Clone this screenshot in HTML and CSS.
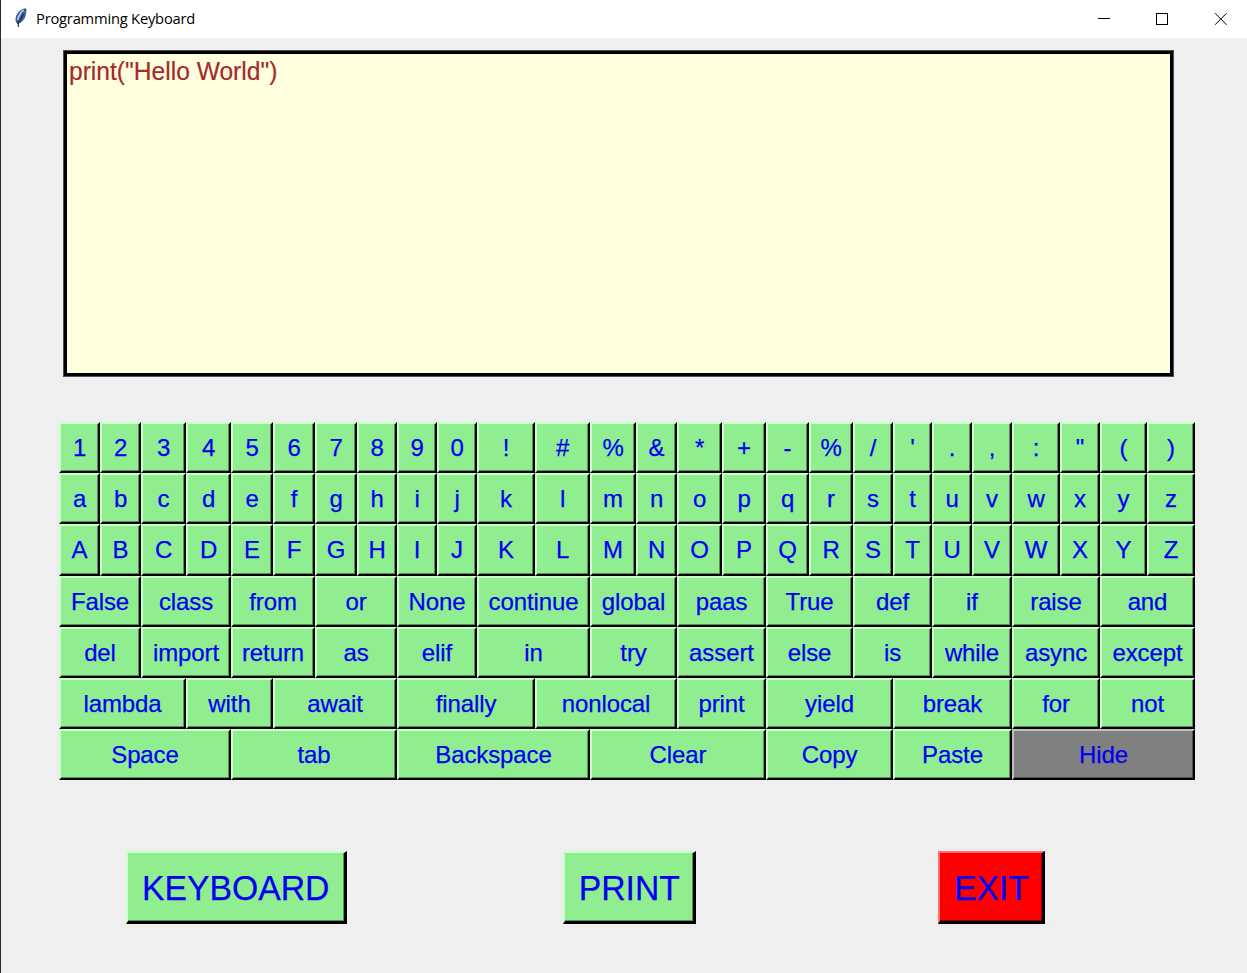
FILE: index.html
```html
<!DOCTYPE html>
<html lang="en">
<head>
<meta charset="utf-8">
<title>Programming Keyboard</title>
<link rel="stylesheet" href="styles.css">
</head>
<body>
<div class="window">
  <header class="titlebar">
    <svg class="feather" width="13" height="20" viewBox="0 0 13 20">
      <path d="M11.8 0.8 C8 1 4.2 3.6 2.6 8 C1.6 11 1.6 13.8 3.6 15.8 C7.4 14.4 10.4 11.6 11.2 7.6 C11.6 5 12.4 2.6 11.8 0.8Z" fill="#3d63a0" stroke="#26344f" stroke-width=".7"/>
      <path d="M9.8 2 C6.6 4 4.6 7.6 3.6 12" fill="none" stroke="#a9c6ea" stroke-width="1.8"/>
      <path d="M9.6 5.5 C8 9.5 6.4 12 4.2 14.5 L4.4 19" fill="none" stroke="#1b2233" stroke-width="1.1"/>
    </svg>
    <span class="title">Programming Keyboard</span>
    <svg class="controls" width="130" height="14" viewBox="0 0 130 14" fill="none" stroke="#000" stroke-width="1">
      <path d="M0 6.5H12"/>
      <rect x="58.5" y="1.5" width="11" height="11"/>
      <path d="M117 1.2L128.6 12.8M128.6 1.2L117 12.8"/>
    </svg>
  </header>
  <main class="content">
    <div class="editor"><span class="code">print("Hello World")</span></div>
    <div class="keys" id="keys"></div>
    <div class="actions">
      <button class="key action keyboard"><span class="caption">KEYBOARD</span></button>
      <button class="key action print"><span class="caption">PRINT</span></button>
      <button class="key action exit"><span class="caption">EXIT</span></button>
    </div>
  </main>
</div>
<script src="keys.js"></script>
</body>
</html>
```
FILE: styles.css
```css
* { box-sizing: border-box; }
body {
  margin: 0;
  background: #efefef;
  font-family: "Liberation Sans", Arial, sans-serif;
}
.window {
  width: 1247px;
  height: 973px;
  border-left: 1px solid #2b2b2b;
  display: flex;
  flex-direction: column;
  overflow: hidden;
}
.titlebar {
  height: 38px;
  flex: none;
  display: flex;
  align-items: center;
  background: #fff;
  padding: 0 19px 0 13px;
}
.feather { margin-bottom: 3px; }
.title {
  margin: -2px 0 0 9px;
  font: 14.7px/20px "Open Sans", sans-serif;
  letter-spacing: -0.2px;
  color: #000;
}
.controls { margin-left: auto; }
.content {
  flex: 1;
  display: flex;
  flex-direction: column;
  align-items: flex-start;
}
.editor {
  width: 1109px;
  height: 325px;
  margin: 13px 0 0 63px;
  padding: 2px;
  border: 3px solid #000;
  box-shadow: 0 0 0 1px #505050;
  background: #ffffe0;
  color: #a52a2a;
  font-size: 26px;
  line-height: 30px;
  -webkit-text-stroke: 0.2px;
}
.code {
  display: inline-block;
  transform: scaleX(0.946);
  transform-origin: left;
}
.keys {
  margin: 46px 0 0 58px;
  display: grid;
  grid-template-columns: 41px 41px 45px 45px 42px 42px 42px 40px 40px 40px 58px 55px 46px 41px 45px 44px 43px 44px 40px 39px 40px 40px 48px 40px 47px 48px;
  grid-template-rows: 51px 51px 52px 51px 51px 51px 51px;
}
.key {
  margin: 0;
  padding: 0;
  border: 2px solid;
  border-color: #c9ffc9 #000 #000 #c9ffc9;
  border-radius: 0;
  box-shadow: inset -1px -1px #5a8f5a;
  background: #90ee90;
  color: #0000f0;
  font-family: inherit;
  font-size: 24px;
  line-height: 28px;
  letter-spacing: -0.1px;
  text-align: center;
  white-space: nowrap;
  -webkit-text-stroke: 0.25px;
}
.hide {
  background: #808080;
  border-color: #c0c0c0 #000 #000 #c0c0c0;
  box-shadow: inset -1px -1px #505050;
}
.actions {
  display: flex;
  margin: 71px 0 0 125px;
}
.action {
  height: 73px;
  padding: 1px 0 0;
  font-size: 35.5px;
  line-height: 40px;
  letter-spacing: 0;
  border-width: 2px 3px 3px 2px;
}
.caption {
  display: inline-block;
  transform: scaleX(0.95);
}
.keyboard { width: 221px; }
.print { width: 133px; margin-left: 216px; }
.exit {
  width: 107px;
  margin-left: 242px;
  background: #f00;
  border-color: #ff7070 #000 #000 #ff7070;
  box-shadow: inset -1px -1px #900000;
}
```
FILE: keys.js
```js
const rows = [
  [...'1234567890!#%&*+-%/\'.,:"()'].map(c => [c, 1]),
  [...'abcdefghijklmnopqrstuvwxyz'].map(c => [c, 1]),
  [...'ABCDEFGHIJKLMNOPQRSTUVWXYZ'].map(c => [c, 1]),
  ['False', 'class', 'from', 'or', 'None', 'continue', 'global', 'paas', 'True', 'def', 'if', 'raise', 'and'].map(c => [c, 2]),
  ['del', 'import', 'return', 'as', 'elif', 'in', 'try', 'assert', 'else', 'is', 'while', 'async', 'except'].map(c => [c, 2]),
  [['lambda', 3], ['with', 2], ['await', 3], ['finally', 3], ['nonlocal', 3], ['print', 2], ['yield', 3], ['break', 3], ['for', 2], ['not', 2]],
  [['Space', 4], ['tab', 4], ['Backspace', 4], ['Clear', 4], ['Copy', 3], ['Paste', 3], ['Hide', 4]]
];
const keys = document.getElementById('keys');
rows.flat().forEach(([label, span]) => {
  const b = document.createElement('button');
  b.className = label === 'Hide' ? 'key hide' : 'key';
  b.style.gridColumn = 'span ' + span;
  b.textContent = label;
  keys.appendChild(b);
});
```
